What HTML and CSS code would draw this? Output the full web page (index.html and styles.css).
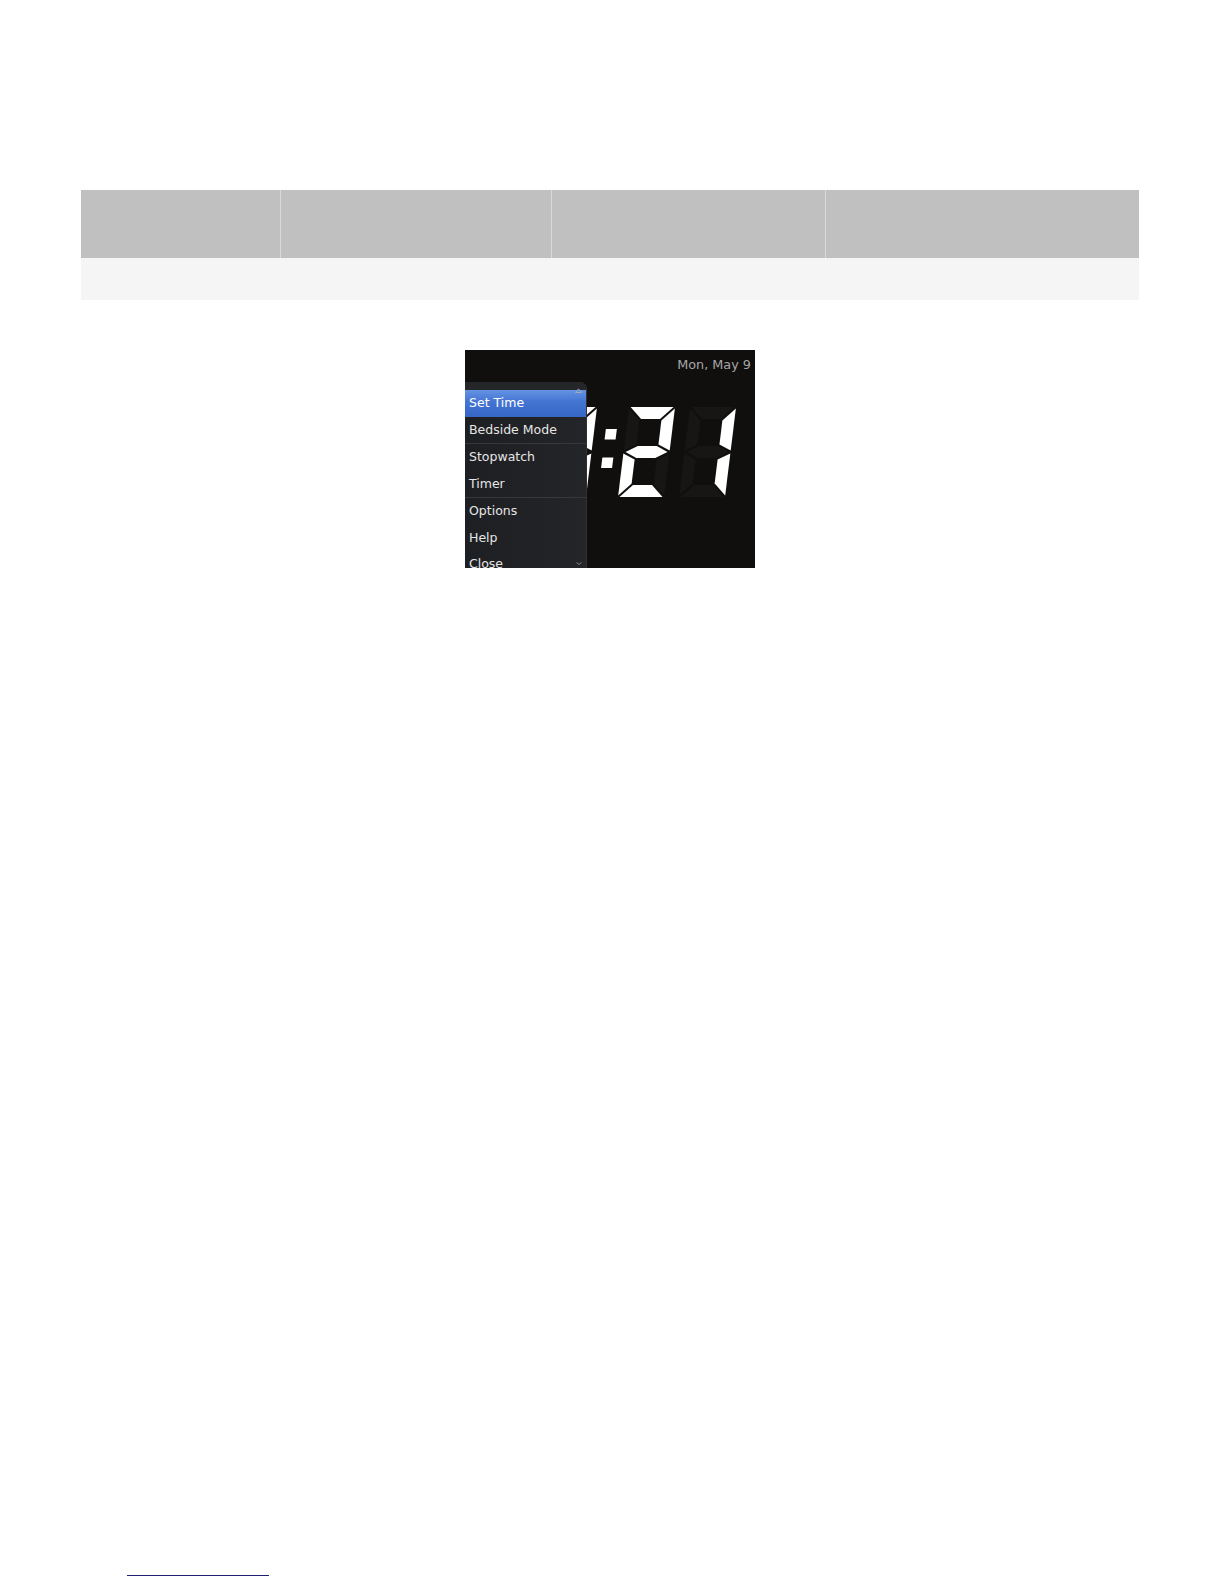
FILE: index.html
```html
<!DOCTYPE html>
<html>
<head>
<meta charset="utf-8">
<title>Clock</title>
<link rel="stylesheet" href="styles.css">
</head>
<body>
<div class="page">
  <table class="grid">
    <colgroup><col class="w1"><col class="w2"><col class="w3"><col class="w4"></colgroup>
    <thead><tr><th></th><th></th><th></th><th></th></tr></thead>
    <tbody><tr><td></td><td></td><td></td><td></td></tr></tbody>
  </table>

  <div class="shot">
    <svg class="digits" viewBox="0 0 290 218" width="290" height="218">
      <defs>
        <polygon id="sa" points="1.5,-90 44.5,-90 32.5,-78 13.5,-78"/>
        <polygon id="sb" points="46,-88.5 46,-46.5 34,-52.5 34,-76.5"/>
        <polygon id="sc" points="46,-43.5 46,-1.5 34,-13.5 34,-37.5"/>
        <polygon id="sd" points="1.5,0 44.5,0 32.5,-12 13.5,-12"/>
        <polygon id="se" points="0,-43.5 0,-1.5 12,-13.5 12,-37.5"/>
        <polygon id="sf" points="0,-88.5 0,-46.5 12,-52.5 12,-76.5"/>
        <polygon id="sg" points="2,-45 13.5,-51 32.5,-51 44,-45 32.5,-39 13.5,-39"/>
      </defs>
      <g transform="translate(75,147) skewX(-7)">
        <use href="#sa" class="on"/><use href="#sb" class="on"/><use href="#sc" class="on"/>
        <use href="#sd" class="on"/><use href="#se" class="on"/><use href="#sf" class="on"/>
        <use href="#sg" class="off"/>
      </g>
      <g transform="translate(130,147) skewX(-7)">
        <rect x="2.5" y="-68" width="11" height="10.5" class="on"/>
        <rect x="2.5" y="-39.5" width="11" height="10.5" class="on"/>
      </g>
      <g transform="translate(153,147) skewX(-7)">
        <use href="#sa" class="on"/><use href="#sb" class="on"/><use href="#sc" class="off"/>
        <use href="#sd" class="on"/><use href="#se" class="on"/><use href="#sf" class="off"/>
        <use href="#sg" class="on"/>
      </g>
      <g transform="translate(214,147) skewX(-7)">
        <use href="#sa" class="off"/><use href="#sb" class="on"/><use href="#sc" class="on"/>
        <use href="#sd" class="off"/><use href="#se" class="off"/><use href="#sf" class="off"/>
        <use href="#sg" class="off"/>
      </g>
    </svg>

    <div class="date">Mon, May 9</div>

    <div class="menu">
      <svg class="arrow-up" viewBox="0 0 7 5" width="7" height="5"><path d="M0.5 4.5 L3.5 0.8 L6.5 4.5 Z" fill="none" stroke="#a9adb5" stroke-width="0.9"/></svg>
      <div class="menu-top"></div>
      <div class="item sel">Set Time</div>
      <div class="item">Bedside Mode</div>
      <div class="sep"></div>
      <div class="item">Stopwatch</div>
      <div class="item">Timer</div>
      <div class="sep"></div>
      <div class="item">Options</div>
      <div class="item">Help</div>
      <div class="item">Close<svg class="arrow-down" viewBox="0 0 6 3" width="6" height="3"><path d="M0.5 0.5 L3 2.5 L5.5 0.5" fill="none" stroke="#8a8d93" stroke-width="0.9"/></svg></div>
    </div>
  </div>

  <div class="footline"></div>
</div>
</body>
</html>
```
FILE: styles.css
```css
html, body {
  margin: 0;
  padding: 0;
  background: #ffffff;
}

.page {
  box-sizing: border-box;
  min-height: 1584px;
  padding: 190px 0 8px 81px;
  display: flex;
  flex-direction: column;
  align-items: flex-start;
}

.grid {
  width: 1058px;
  table-layout: fixed;
  border-collapse: separate;
  border-spacing: 0;
}

.w1 { width: 199px; }
.w2 { width: 271px; }
.w3 { width: 274px; }
.w4 { width: 314px; }

.grid th {
  box-sizing: border-box;
  height: 68px;
  padding: 0;
  background: #c0c0c0;
}

.grid th + th {
  border-left: 1px solid #dadada;
}

.grid td {
  box-sizing: border-box;
  height: 42px;
  padding: 0;
  background: #f5f5f5;
}

.shot {
  position: relative;
  width: 290px;
  height: 218px;
  margin: 50px 0 0 384px;
  background: #100f0e;
  overflow: hidden;
  font-family: "DejaVu Sans", "Liberation Sans", sans-serif;
}

.digits {
  position: absolute;
  left: 0;
  top: 0;
  display: block;
}

.on { fill: #ffffff; }
.off { fill: #171615; }

.date {
  position: relative;
  text-align: right;
  padding: 6.5px 4px 0 0;
  font-size: 12.8px;
  line-height: 16px;
  color: #a6a6a6;
}

.menu {
  position: absolute;
  left: 0;
  top: 32px;
  bottom: 0;
  width: 122px;
  box-sizing: border-box;
  background: linear-gradient(90deg, #1e1f22, #222326 70%, #242529);
  border-right: 1px solid #303135;
  border-top-right-radius: 7px;
}

.menu-top {
  height: 8px;
  border-top-right-radius: 7px;
  background: #25262a;
}

.arrow-up {
  position: absolute;
  right: 4px;
  top: 6px;
  z-index: 2;
}

.item {
  position: relative;
  height: 26.5px;
  line-height: 26px;
  padding-left: 4px;
  font-size: 12.5px;
  color: #e6e6e6;
  white-space: nowrap;
}

.sel {
  background: linear-gradient(#6494e2, #4676d4 40%, #3666c6);
  color: #ffffff;
}

.sep {
  height: 1px;
  background: #37383c;
}

.arrow-down {
  position: absolute;
  right: 4px;
  top: 11px;
}

.footline {
  margin-top: auto;
  margin-left: 46px;
  width: 142px;
  height: 1px;
  background: #1f1f73;
}
```
